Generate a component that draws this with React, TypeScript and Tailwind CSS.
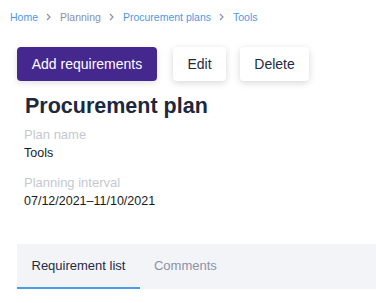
const Chevron = () => (
  <svg width="5" height="8" viewBox="0 0 5 8" className="ml-[8px] mr-[9px] shrink-0">
    <path d="M1 1l3 3-3 3" fill="none" stroke="#8d92a3" strokeWidth={1.2} />
  </svg>
)

export default function App() {
  return (
    <div className="h-[303px] w-full overflow-hidden bg-white font-['Liberation_Sans',Arial,sans-serif]">
      {/* Breadcrumb */}
      <nav className="flex items-center pl-[10px] pt-[11px] text-[10.5px] leading-[12px]">
        <span className="text-[#4a9ae8]">Home</span>
        <Chevron />
        <span className="text-[#8b90a2]">Planning</span>
        <Chevron />
        <span className="text-[#4a9ae8]">Procurement plans</span>
        <Chevron />
        <span className="text-[#4a9ae8]">Tools</span>
      </nav>

      <div className="pl-[17px]">
        {/* Actions */}
        <div className="mt-[24px] flex items-center">
          <button className="h-[34px] w-[140px] rounded-[4px] bg-[#45288e] text-[14px] text-white shadow-[0_2px_6px_rgba(0,0,0,0.12)]">
            Add requirements
          </button>
          <button className="ml-[16px] h-[34px] w-[53px] rounded-[4px] bg-white text-[14px] text-[#1f2a44] shadow-[0_2px_7px_rgba(0,0,0,0.16)]">
            Edit
          </button>
          <button className="ml-[14px] h-[34px] w-[69px] rounded-[4px] bg-white text-[14px] text-[#1f2a44] shadow-[0_2px_7px_rgba(0,0,0,0.16)]">
            Delete
          </button>
        </div>

        {/* Plan info */}
        <div className="pl-[7px]">
          <h1 className="mt-[11.5px] pl-[1px] text-[21.5px] font-bold leading-[26px] text-[#1c2740]">
            Procurement plan
          </h1>
          <div className="mt-[8.5px] text-[13px] leading-[16px] text-[#c5c8d1]">Plan name</div>
          <div className="mt-[2px] text-[12.5px] leading-[16px] text-[#1a1a1a]">Tools</div>
          <div className="mt-[13.5px] text-[13px] leading-[16px] text-[#c5c8d1]">Planning interval</div>
          <div className="mt-[2px] text-[12.5px] leading-[16px] text-[#1a1a1a]">07/12/2021–11/10/2021</div>
        </div>

        {/* Tabs */}
        <div className="mt-[35px] flex h-[45px] bg-[#f3f4f8] text-[13px]">
          <div className="flex items-center border-b-[2.5px] border-[#4a9be8] px-[14.5px] pt-[2px] text-[#1f2a44]">
            Requirement list
          </div>
          <div className="flex items-center pl-[14px] pr-[15px] text-[#8c91a6]">Comments</div>
        </div>
      </div>
    </div>
  )
}
